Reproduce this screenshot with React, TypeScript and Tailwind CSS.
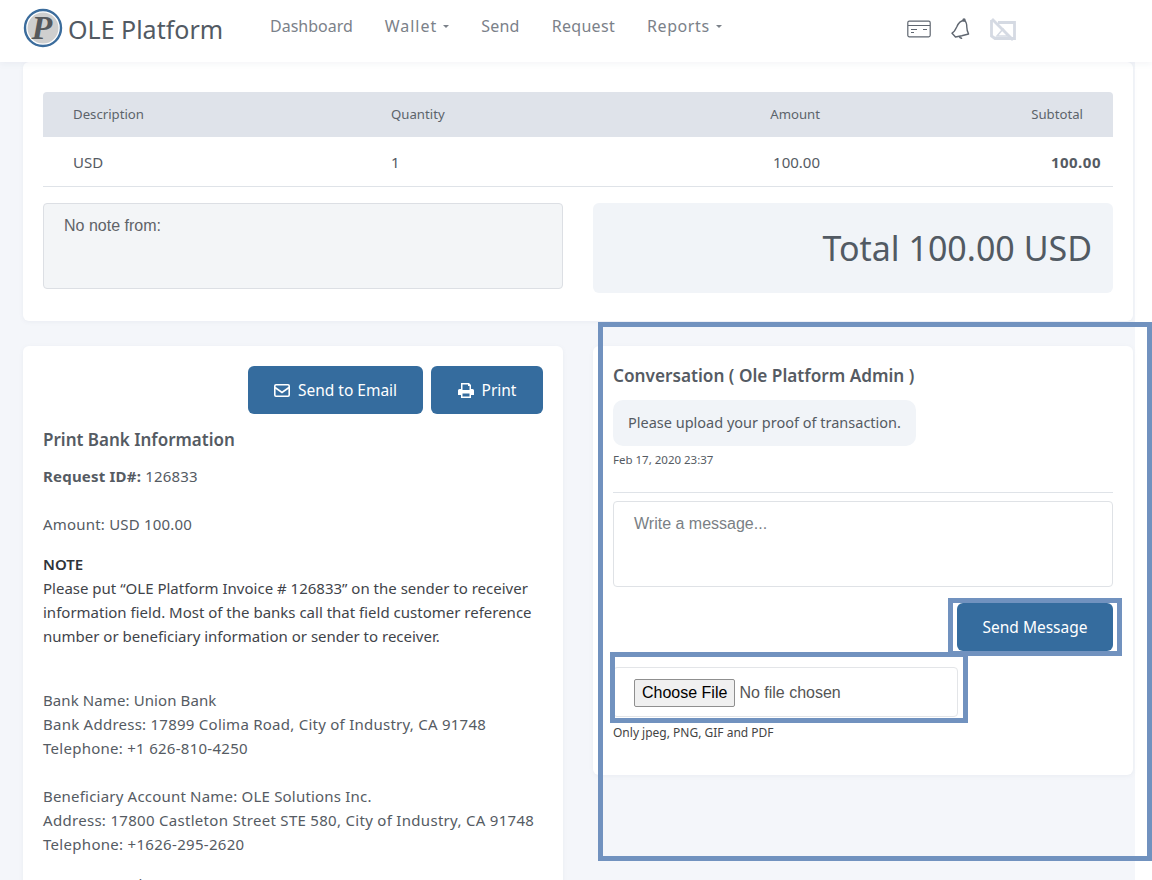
import React from "react";

const font = { fontFamily: '"Noto Sans", sans-serif' };

function Nav({ label, caret, className }: { label: string; caret?: boolean; className?: string }) {
  return (
    <span className="flex items-center gap-[6px] text-[16px] text-[#7b8189]">
      <span className={className}>{label}</span>
      {caret && <span className="mt-[1px] h-0 w-0 border-x-[3.500px] border-t-[3.500px] border-x-transparent border-t-[#7b8189]" />}
    </span>
  );
}

function Logo() {
  return (
    <svg width="40" height="40" viewBox="0 0 40 40" className="mb-[6px] shrink-0">
      <circle cx="20" cy="20" r="18" fill="white" stroke="#3b6c9c" strokeWidth="2.4" />
      <circle cx="20" cy="20" r="15.500" fill="#cfcfcf" />
      <text x="19" y="31" textAnchor="middle" fontFamily="Liberation Serif" fontWeight="700" fontStyle="italic" fontSize="34" fill="#55585c">P</text>
    </svg>
  );
}

function CardIcon() {
  return (
    <svg width="24" height="18" viewBox="0 0 24 18" fill="none" stroke="#5f6670" strokeWidth="1.2">
      <rect x="0.8" y="1.2" width="22.4" height="15.6" rx="1.5" />
      <path d="M1 5.500h22M4 9.500h6M16 9.500h4M4 12.500h3" />
    </svg>
  );
}

function BellIcon() {
  return (
    <svg width="21" height="22" viewBox="0 0 21 22" fill="none" stroke="#5f6670" strokeWidth="1.4">
      <path d="M14.500 2.500c2 1.400 2.300 4.200 2.300 6.500 0 3 .8 5.200 1.800 7l-6.800 1.700-6.300 1.300c-1-1.300-2.300-2.500-3.500-3.800 2.200-1.200 3.500-3.600 4.700-6.200 1.200-2.900 3.200-6.800 7.800-6.500z" strokeLinejoin="round" />
      <circle cx="14" cy="2" r="1" fill="#5f6670" />
      <path d="M9.500 18.500c.4 1.400 1.400 2 2.600 1.500" />
    </svg>
  );
}

function NoImageIcon() {
  return (
    <svg width="26" height="23" viewBox="0 0 26 23" fill="none" stroke="#d5dae3" strokeWidth="2.8">
      <path d="M8 4.500h16.500v16H5L1.500 18V2" />
      <path d="M2 1l21 21" />
      <path d="M7 18l6-7 5 7z" strokeWidth="1.600" />
    </svg>
  );
}

function Card({ className, children }: { className: string; children: React.ReactNode }) {
  return <div className={`rounded-[6px] bg-white shadow-[0_1px_4px_rgba(120,130,150,0.08)] ${className}`}>{children}</div>;
}

function Header() {
  return (
    <header className="relative z-10 flex h-[62px] w-full items-center bg-white pl-[23px] shadow-[0_2px_6px_rgba(120,130,150,0.08)]">
      <Logo />
      <span className="mb-[3px] ml-[5px] w-[202px] text-[25px] text-[#525a63]">OLE Platform</span>
      <nav className="flex items-center gap-[32px] pb-[11px]">
        <Nav label="Dashboard" />
        <Nav label="Wallet" caret className="tracking-[0.95px]" />
        <Nav label="Send" className="tracking-[0.25px]" />
        <Nav label="Request" className="tracking-[0.3px]" />
        <Nav label="Reports" caret className="tracking-[0.6px]" />
      </nav>
      <div className="ml-[185px] flex items-center gap-[19px] pb-[4px]">
        <CardIcon />
        <BellIcon />
        <NoImageIcon />
      </div>
    </header>
  );
}

function InvoiceCard() {
  return (
    <Card className="h-[259px] w-[1110px] px-[20px] pt-[30px]">
      <div className="grid h-[45px] grid-cols-[318px_329px_100px_263px] items-center rounded-t-[4px] bg-[#dfe3ea] px-[30px] pt-[1px] text-[13.200px] text-[#5c636b]">
        <span>Description</span>
        <span>Quantity</span>
        <span className="text-right">Amount</span>
        <span className="text-right">Subtotal</span>
      </div>
      <div className="grid h-[50px] grid-cols-[318px_329px_100px_281px] items-center border-b border-[#dfe3e8] pl-[30px] pr-[12px] pt-[2px] text-[15px] text-[#555b63]">
        <span>USD</span>
        <span>1</span>
        <span className="text-right">100.00</span>
        <span className="text-right font-bold tracking-[0.5px]">100.00</span>
      </div>
      <div className="mt-[16px] flex gap-[30px]">
        <div className="h-[86px] w-[520px] rounded-[4px] border border-[#dcdfe4] bg-[#f3f5f7] px-[20px] py-[10px] text-[16px] text-[#5f6368]" style={{ fontFamily: '"Liberation Sans", sans-serif' }}>
          No note from:
        </div>
        <div className="flex h-[90px] w-[520px] items-center justify-end rounded-[6px] bg-[#f1f4f8] px-[21px] text-[34px] text-[#525a63]">
          Total 100.00 USD
        </div>
      </div>
    </Card>
  );
}

function BankCard() {
  return (
    <Card className="h-[600px] w-[540px] shrink-0 px-[20px] pt-[20px] text-[15px] leading-[24px] text-[#555b63]">
      <div className="flex justify-end gap-[8px]">
        <button className="flex h-[48px] w-[175px] items-center justify-center gap-[8px] rounded-[6px] bg-[#356c9e] text-[15.500px] text-white">
          <svg width="16" height="13" viewBox="0 0 16 13" fill="none" stroke="white" strokeWidth="1.6">
            <rect x="0.8" y="0.8" width="14.4" height="11.4" rx="1.2" />
            <path d="M1 3.500l7 5 7-5" />
          </svg>
          Send to Email
        </button>
        <button className="flex h-[48px] w-[112px] items-center justify-center gap-[8px] rounded-[6px] bg-[#356c9e] text-[15.500px] text-white">
          <svg width="16" height="15" viewBox="0 0 16 15" fill="white">
            <path d="M3 0h8l2 2v4h1.500A1.500 1.500 0 0 1 16 7.500V12h-3v3H3v-3H0V7.500A1.500 1.500 0 0 1 1.500 6H3zM4.500 1.500V7h7V3H10V1.500zM4.500 10.500v3h7v-3z" fillRule="evenodd" />
          </svg>
          Print
        </button>
      </div>
      <h3 className="mt-[14px] text-[17px] font-semibold leading-[24px]">Print Bank Information</h3>
      <p className="mt-[12px] tracking-[0.2px]"><b className="font-bold">Request ID#:</b> 126833</p>
      <p className="mt-[24px] tracking-[0.2px]">Amount: USD 100.00</p>
      <p className="mt-[16px] font-semibold text-[#2f343a]">NOTE</p>
      <p className="w-[495px] text-[#3f444a]">Please put “OLE Platform Invoice # 126833” on the sender to receiver information field. Most of the banks call that field customer reference number or beneficiary information or sender to receiver.</p>
      <p className="mt-[40px] tracking-[0.1px]">Bank Name: Union Bank</p>
      <p className="tracking-[0.25px]">Bank Address: 17899 Colima Road, City of Industry, CA 91748</p>
      <p className="tracking-[0.27px]">Telephone: +1 626-810-4250</p>
      <p className="mt-[24px] tracking-[0.2px]">Beneficiary Account Name: OLE Solutions Inc.</p>
      <p className="tracking-[0.3px]">Address: 17800 Castleton Street STE 580, City of Industry, CA 91748</p>
      <p className="tracking-[0.3px]">Telephone: +1626-295-2620</p>
      <p className="mt-[16px]">Account Number</p>
    </Card>
  );
}

function ConversationCard() {
  return (
    <Card className="h-[429px] w-[540px] px-[20px] pt-[18px] text-[#555b63]">
      <h3 className="text-[17.200px] font-semibold leading-[24px]">Conversation ( Ole Platform Admin )</h3>
      <div className="mt-[12px] w-fit rounded-[10px] bg-[#f1f4f8] px-[15px] pb-[12px] pt-[10px] text-[14.500px] leading-[24px]">Please upload your proof of transaction.</div>
      <p className="mt-[6px] text-[11.500px] leading-[16px]">Feb 17, 2020 23:37</p>
      <div className="mt-[24px] h-px w-[500px] bg-[#dfe3e8]" />
      <div className="mt-[8px] h-[86px] w-[500px] rounded-[4px] border border-[#dfe2e6] px-[20px] py-[10px] text-[16px] text-[#7a7f85]" style={{ fontFamily: '"Liberation Sans", sans-serif' }}>
        Write a message...
      </div>
      <div className="mt-[16px] flex w-[500px] justify-end">
        <button className="h-[48px] w-[156px] rounded-[6px] bg-[#356c9e] pt-[2px] text-[15.500px] text-white">Send Message</button>
      </div>
      <div className="mt-[16px] flex h-[50px] w-[345px] items-center rounded-[4px] border border-[#e3e5e8] pl-[20px] pt-[2px]">
        <input type="file" className="text-[16px] text-[#555] file:mr-[4px] file:rounded-[2px] file:border file:border-[#8f8f8f] file:bg-[#f0f0f0] file:px-[7px] file:py-[1px] file:text-[16px] file:text-black" style={{ fontFamily: '"Liberation Sans", sans-serif' }} />
      </div>
      <p className="mt-[8px] text-[12px] leading-[16px] text-[#444]">Only jpeg, PNG, GIF and PDF</p>
    </Card>
  );
}

export default function App() {
  return (
    <div className="relative h-[880px] w-[1152px] overflow-hidden bg-white" style={font}>
      <Header />
      <main className="h-[818px] w-[1135px] bg-[#f4f6fa] pl-[23px]">
        <InvoiceCard />
        <div className="mt-[25px] flex gap-[30px]">
          <BankCard />
          <ConversationCard />
        </div>
      </main>
      <div className="pointer-events-none absolute left-[598px] top-[322px] h-[539px] w-[554px] border-[5px] border-[#7192bf]" />
      <div className="pointer-events-none absolute left-[948px] top-[598px] h-[58px] w-[174px] border-[5px] border-[#7192bf]" />
      <div className="pointer-events-none absolute left-[610px] top-[652px] h-[71px] w-[358px] border-[5px] border-[#7192bf]" />
    </div>
  );
}
